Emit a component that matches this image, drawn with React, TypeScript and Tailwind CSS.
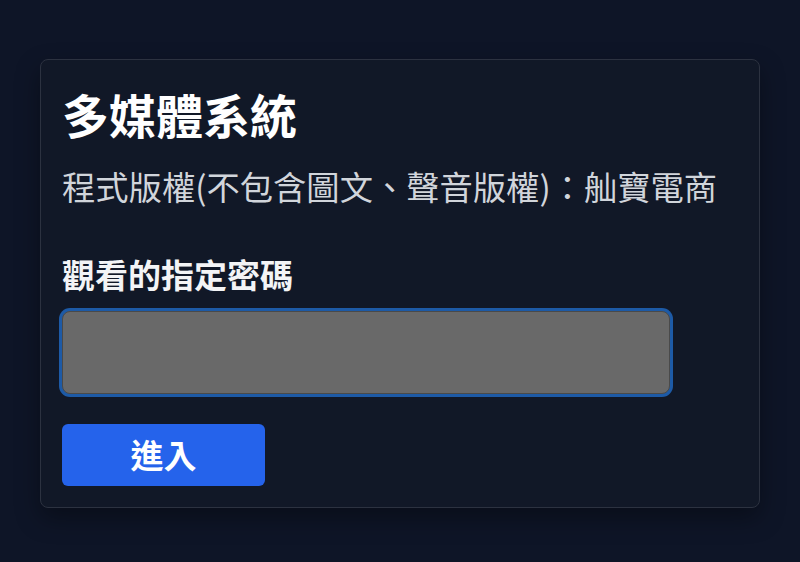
import React from "react";

export default function App() {
  const [pw, setPw] = React.useState("");

  return (
    <div
      className="min-h-[562px] w-full bg-[#0e1527] pt-[59px] px-10"
      style={{ fontFamily: '"Noto Sans CJK TC", "Noto Sans", sans-serif' }}
    >
      <div className="rounded-lg border border-[#2c3240] bg-[#111827] px-[21px] pt-[26px] pb-[21px] shadow-[0_10px_25px_rgba(0,0,0,0.35)]">
        <h1 className="text-[47px] leading-[56px] font-bold text-white">多媒體系統</h1>
        <p className="mt-6 text-[33.3px] leading-[40px] text-[#d1d5db]">
          程式版權(不包含圖文、聲音版權)：舢寶電商
        </p>

        <label className="mt-12 block text-[33px] leading-[40px] font-bold text-[#f3f4f6]">
          觀看的指定密碼
        </label>
        <input
          type="password"
          value={pw}
          onChange={(e) => setPw(e.target.value)}
          className="mt-[17px] block h-[83px] w-[608px] rounded-lg border border-[#4a4a4a] bg-[#696969] px-4 text-[28px] text-white outline-none ring-[3px] ring-[#1d5aa6]"
        />

        <button
          type="button"
          className="mt-[30px] flex h-[62px] w-[203px] items-center justify-center rounded-md bg-[#2563eb] text-[33px] font-bold text-white"
        >
          進入
        </button>
      </div>
    </div>
  );
}
